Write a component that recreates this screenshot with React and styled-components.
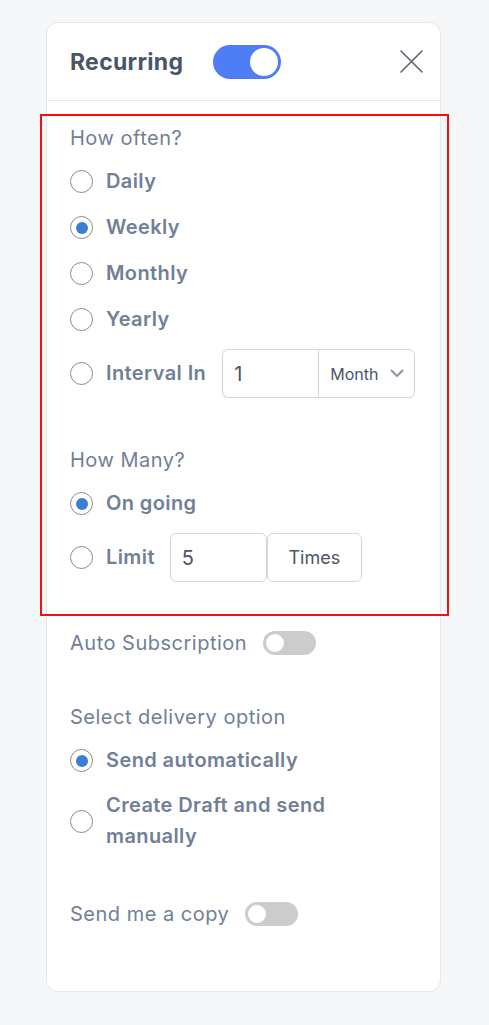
import React, { useState } from "react";
import styled, { createGlobalStyle } from "styled-components";

const GlobalStyle = createGlobalStyle`
  body {
    margin: 0;
    background-color: #f6f7f9;
    font-family: Inter, "Noto Sans", sans-serif;
  }
`;

const Page = styled.div`
  padding: 22px 0 0 46px;
  height: 1025px;
  box-sizing: border-box;
`;

const Card = styled.div`
  width: 395px;
  height: 970px;
  box-sizing: border-box;
  background-color: white;
  border: 1px solid #e4e7eb;
  border-radius: 12px;
`;

const Header = styled.div`
  display: flex;
  align-items: center;
  height: 77px;
  padding: 0 17px 0 23px;
  border-bottom: 1px solid #e5e7eb;
`;

const Title = styled.div`
  font-size: 23px;
  font-weight: 700;
  letter-spacing: 0.3px;
  color: #4a5568;
  margin-right: 30px;
`;

const Switch = styled.div`
  display: flex;
  align-items: center;
  justify-content: ${(p) => (p.on ? "flex-end" : "flex-start")};
  box-sizing: border-box;
  width: ${(p) => (p.big ? "68px" : "53px")};
  height: ${(p) => (p.big ? "34px" : "24px")};
  padding: 3px;
  border-radius: 20px;
  background-color: ${(p) => (p.on ? "#4f7df6" : "#cccccc")};
  cursor: pointer;
`;

const Knob = styled.div`
  width: ${(p) => (p.big ? "28px" : "18px")};
  height: ${(p) => (p.big ? "28px" : "18px")};
  border-radius: 50%;
  background-color: white;
`;

const CloseBtn = styled.button`
  margin-left: auto;
  display: flex;
  padding: 0;
  border: 0;
  background: none;
  cursor: pointer;
`;

const Body = styled.div`
  padding: 13px 23px 0 23px;
`;

const Highlight = styled.div`
  margin: 0 -32px 0 -30px;
  padding: 10px 28px 32px 28px;
  border: 2px solid #ee1111;
`;

const Label = styled.div`
  font-size: 20px;
  line-height: 24px;
  letter-spacing: 0.5px;
  color: #718096;
`;

const Options = styled.div`
  display: flex;
  flex-direction: column;
  gap: 13px;
  margin-top: 15px;
`;

const OptionRow = styled.label`
  display: flex;
  align-items: center;
  min-height: 33px;
  cursor: pointer;
`;

const Radio = styled.span`
  flex: none;
  display: flex;
  align-items: center;
  justify-content: center;
  box-sizing: border-box;
  width: 23px;
  height: 23px;
  border-radius: 50%;
  border: 1.5px solid #8c8c8c;
  margin-right: 13px;

  &::after {
    content: "";
    width: 12px;
    height: 12px;
    border-radius: 50%;
    background-color: ${(p) => (p.checked ? "#3d7ed3" : "transparent")};
  }
`;

const OptionText = styled.span`
  font-size: 20px;
  font-weight: 600;
  line-height: 31px;
  letter-spacing: 0.4px;
  color: #718096;
`;

const InputGroup = styled.div`
  display: flex;
  height: 49px;
  margin-left: ${(p) => p.gap || 16}px;
`;

const NumberBox = styled.input`
  box-sizing: border-box;
  width: ${(p) => p.w}px;
  height: 49px;
  margin: 0;
  padding: 0 11px;
  font-family: inherit;
  font-size: 20px;
  color: #4a5568;
  border: 1px solid #cfd8e3;
  border-radius: ${(p) => (p.joined ? "6px 0 0 6px" : "6px")};
  border-right: ${(p) => (p.joined ? "0" : "1px solid #cfd8e3")};
  outline: none;
`;

const SelectBox = styled.div`
  box-sizing: border-box;
  display: flex;
  align-items: center;
  justify-content: space-between;
  width: 97px;
  padding: 0 10px 0 11px;
  font-size: 16px;
  color: #4a5568;
  border: 1px solid #cfd8e3;
  border-radius: 0 6px 6px 0;
`;

const UnitBox = styled.div`
  box-sizing: border-box;
  display: flex;
  align-items: center;
  justify-content: center;
  width: 95px;
  font-size: 18px;
  color: #4a5568;
  border: 1px solid #cfd8e3;
  border-radius: 6px;
`;

const Group = styled.div`
  margin-top: ${(p) => p.top || 0}px;
`;

const ToggleRow = styled.div`
  display: flex;
  align-items: center;
  gap: 16px;
  margin-top: ${(p) => p.top}px;
`;

function Option({ checked, children, onSelect }) {
  return (
    <OptionRow onClick={onSelect}>
      <Radio checked={checked} />
      <OptionText>{children}</OptionText>
    </OptionRow>
  );
}

function Toggle({ on, big, onToggle }) {
  return (
    <Switch on={on} big={big} onClick={onToggle}>
      <Knob big={big} />
    </Switch>
  );
}

export default function App() {
  const [recurring, setRecurring] = useState(true);
  const [often, setOften] = useState("weekly");
  const [many, setMany] = useState("ongoing");
  const [delivery, setDelivery] = useState("auto");
  const [autoSub, setAutoSub] = useState(false);
  const [copy, setCopy] = useState(false);

  return (
    <Page>
      <GlobalStyle />
      <Card>
        <Header>
          <Title>Recurring</Title>
          <Toggle big on={recurring} onToggle={() => setRecurring(!recurring)} />
          <CloseBtn aria-label="Close">
            <svg width="23" height="23" viewBox="0 0 23 23">
              <path
                d="M1 1 L22 22 M22 1 L1 22"
                stroke="#5b6271"
                strokeWidth="1.6"
                strokeLinecap="round"
              />
            </svg>
          </CloseBtn>
        </Header>
        <Body>
          <Highlight>
            <Label>How often?</Label>
            <Options>
              <Option checked={often === "daily"} onSelect={() => setOften("daily")}>
                Daily
              </Option>
              <Option checked={often === "weekly"} onSelect={() => setOften("weekly")}>
                Weekly
              </Option>
              <Option checked={often === "monthly"} onSelect={() => setOften("monthly")}>
                Monthly
              </Option>
              <Option checked={often === "yearly"} onSelect={() => setOften("yearly")}>
                Yearly
              </Option>
              <OptionRow onClick={() => setOften("interval")}>
                <Radio checked={often === "interval"} />
                <OptionText>Interval In</OptionText>
                <InputGroup>
                  <NumberBox joined w={96} defaultValue="1" />
                  <SelectBox>
                    Month
                    <svg width="14" height="9" viewBox="0 0 14 9">
                      <path
                        d="M1.5 1.5 L7 7 L12.5 1.5"
                        fill="none"
                        stroke="#8a94a6"
                        strokeWidth="2"
                        strokeLinecap="round"
                        strokeLinejoin="round"
                      />
                    </svg>
                  </SelectBox>
                </InputGroup>
              </OptionRow>
            </Options>

            <Group top={50}>
              <Label>How Many?</Label>
              <Options>
                <Option checked={many === "ongoing"} onSelect={() => setMany("ongoing")}>
                  On going
                </Option>
                <OptionRow onClick={() => setMany("limit")}>
                  <Radio checked={many === "limit"} />
                  <OptionText>Limit</OptionText>
                  <InputGroup gap={15}>
                    <NumberBox w={97} defaultValue="5" />
                    <UnitBox>Times</UnitBox>
                  </InputGroup>
                </OptionRow>
              </Options>
            </Group>
          </Highlight>

          <ToggleRow top={15}>
            <Label>Auto Subscription</Label>
            <Toggle on={autoSub} onToggle={() => setAutoSub(!autoSub)} />
          </ToggleRow>

          <Group top={50}>
            <Label>Select delivery option</Label>
            <Options>
              <Option checked={delivery === "auto"} onSelect={() => setDelivery("auto")}>
                Send automatically
              </Option>
              <Option checked={delivery === "draft"} onSelect={() => setDelivery("draft")}>
                Create Draft and send
                <br />
                manually
              </Option>
            </Options>
          </Group>

          <ToggleRow top={50}>
            <Label>Send me a copy</Label>
            <Toggle on={copy} onToggle={() => setCopy(!copy)} />
          </ToggleRow>
        </Body>
      </Card>
    </Page>
  );
}
